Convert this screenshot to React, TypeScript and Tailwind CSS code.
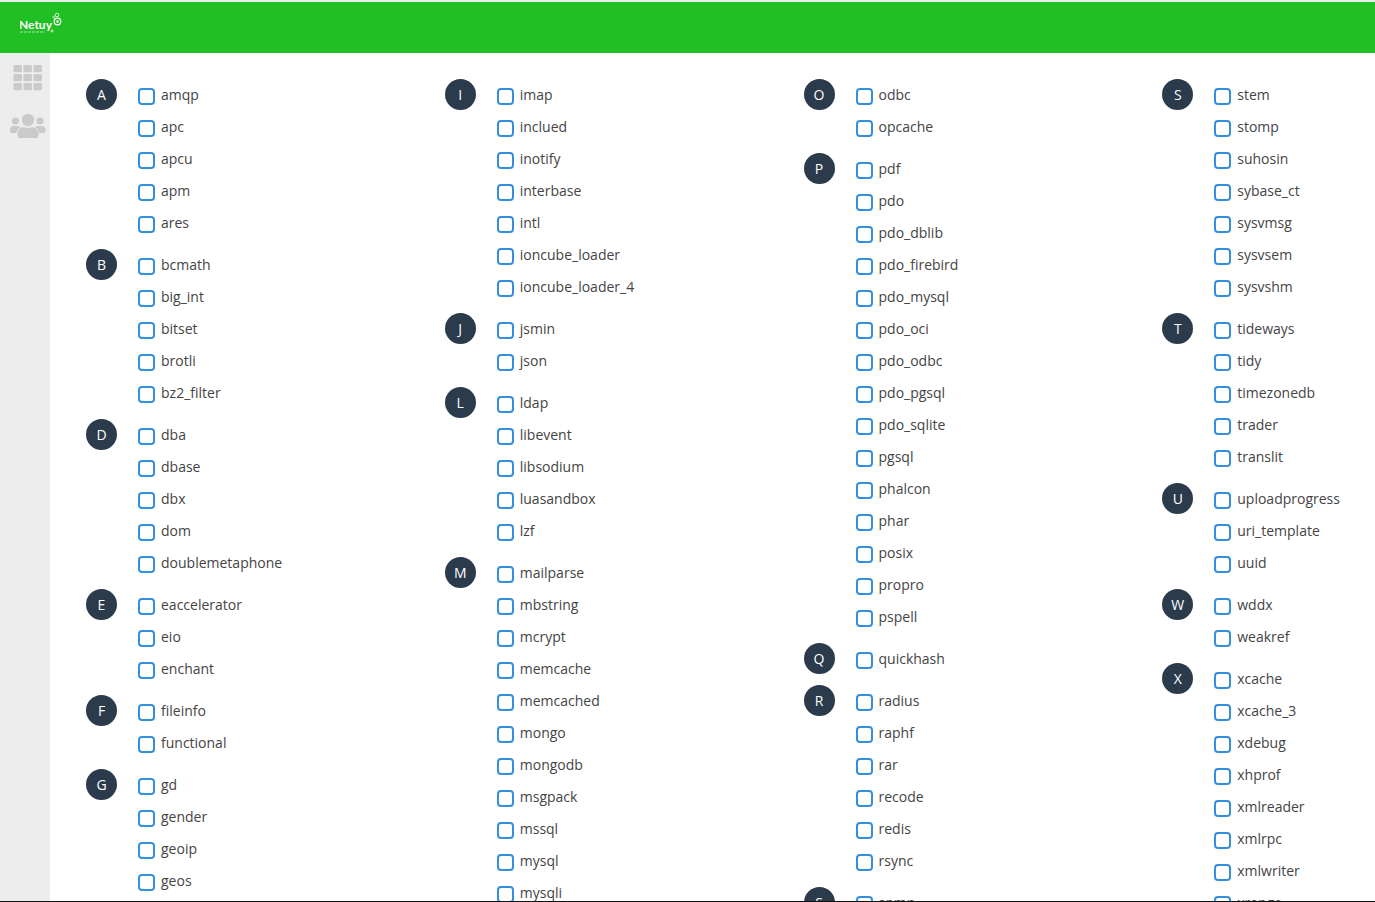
type Group = { letter: string; items: string[] };

const columns: Group[][] = [
  [
    { letter: "A", items: ["amqp", "apc", "apcu", "apm", "ares"] },
    { letter: "B", items: ["bcmath", "big_int", "bitset", "brotli", "bz2_filter"] },
    { letter: "D", items: ["dba", "dbase", "dbx", "dom", "doublemetaphone"] },
    { letter: "E", items: ["eaccelerator", "eio", "enchant"] },
    { letter: "F", items: ["fileinfo", "functional"] },
    { letter: "G", items: ["gd", "gender", "geoip", "geos"] },
  ],
  [
    { letter: "I", items: ["imap", "inclued", "inotify", "interbase", "intl", "ioncube_loader", "ioncube_loader_4"] },
    { letter: "J", items: ["jsmin", "json"] },
    { letter: "L", items: ["ldap", "libevent", "libsodium", "luasandbox", "lzf"] },
    {
      letter: "M",
      items: ["mailparse", "mbstring", "mcrypt", "memcache", "memcached", "mongo", "mongodb", "msgpack", "mssql", "mysql", "mysqli"],
    },
  ],
  [
    { letter: "O", items: ["odbc", "opcache"] },
    {
      letter: "P",
      items: [
        "pdf", "pdo", "pdo_dblib", "pdo_firebird", "pdo_mysql", "pdo_oci", "pdo_odbc", "pdo_pgsql",
        "pdo_sqlite", "pgsql", "phalcon", "phar", "posix", "propro", "pspell",
      ],
    },
    { letter: "Q", items: ["quickhash"] },
    { letter: "R", items: ["radius", "raphf", "rar", "recode", "redis", "rsync"] },
    { letter: "S", items: ["snmp"] },
  ],
  [
    { letter: "S", items: ["stem", "stomp", "suhosin", "sybase_ct", "sysvmsg", "sysvsem", "sysvshm"] },
    { letter: "T", items: ["tideways", "tidy", "timezonedb", "trader", "translit"] },
    { letter: "U", items: ["uploadprogress", "uri_template", "uuid"] },
    { letter: "W", items: ["wddx", "weakref"] },
    { letter: "X", items: ["xcache", "xcache_3", "xdebug", "xhprof", "xmlreader", "xmlrpc", "xmlwriter", "xrange"] },
  ],
];

function Logo() {
  return (
    <a href="#" aria-label="Netuy" className="block">
      <svg width="44" height="26" viewBox="0 0 44 26" fill="none">
        <text x="-1" y="19" fill="#fff" fontSize="12" fontWeight="700" fontFamily="Lato, sans-serif">
          Netuy
        </text>
        <path d="M0 22h25" stroke="#fff" strokeWidth="1" strokeDasharray="3 1" opacity="0.6" />
        <circle cx="32" cy="21" r="1" stroke="#fff" strokeWidth="0.8" />
        <circle cx="37.5" cy="11.5" r="3.3" stroke="#fff" strokeWidth="1.2" />
        <circle cx="37.5" cy="11.5" r="1.2" fill="#fff" />
        <circle cx="37" cy="5" r="1.8" stroke="#fff" strokeWidth="0.8" />
        <circle cx="33.7" cy="7" r="0.9" stroke="#fff" strokeWidth="0.6" />
      </svg>
    </a>
  );
}

function GridIcon() {
  return (
    <svg width="30" height="26" viewBox="0 0 30 26" fill="#cacaca">
      {[0, 9, 18].map((y) =>
        [0, 10, 20].map((x) => <rect key={`${x}-${y}`} x={x + 0.5} y={y} width="8.4" height="7.2" rx="1.3" />)
      )}
    </svg>
  );
}

function UsersIcon() {
  return (
    <svg width="36" height="26" viewBox="0 0 36 26" fill="#cacaca">
      <circle cx="5.5" cy="8" r="3.6" />
      <circle cx="30" cy="8" r="3.6" />
      <circle cx="18" cy="7" r="6.2" />
      <path d="M3.5 13h4.5c.9 0 1.8.3 2.4.9-2.2 1.3-3.6 3.4-4 6.1H1.7C.7 20 0 19.3 0 18.3v-1.8C0 14.6 1.6 13 3.5 13z" />
      <path d="M32 13h-4.5c-.9 0-1.8.3-2.4.9 2.2 1.3 3.6 3.4 4 6.1h4.7c1 0 1.7-.7 1.7-1.7v-1.8c0-1.9-1.6-3.5-3.5-3.5z" />
      <path d="M13.5 14.2h.9c2.3 1 4.9 1 7.2 0h.9c3.4 0 6 2.7 6 6v2.2c0 1.5-1.1 2.6-2.6 2.6H10.1c-1.5 0-2.6-1.1-2.6-2.6v-2.2c0-3.3 2.6-6 6-6z" />
    </svg>
  );
}

function ExtensionGroup({ letter, items }: Group) {
  return (
    <section className="flex items-start gap-[21px]">
      <h2 className="flex size-[31px] shrink-0 items-center justify-center rounded-full bg-[#2b3b4c] text-sm text-white">
        {letter}
      </h2>
      <ul>
        {items.map((name) => (
          <li key={name} className="h-8">
            <label className="flex h-8 items-center gap-1.5 text-sm text-[#444]">
              <input
                type="checkbox"
                name={name}
                className="mt-[3px] size-[17px] shrink-0 appearance-none rounded border-2 border-[#3490dc] bg-white checked:bg-[#3490dc]"
              />
              {name}
            </label>
          </li>
        ))}
      </ul>
    </section>
  );
}

export default function App() {
  return (
    <div className="flex h-screen flex-col overflow-hidden border-b border-[#111] bg-white font-['Open_Sans',sans-serif]">
      <header className="flex h-[53px] shrink-0 items-start border-t-2 border-[#ececec] bg-[#20bf24] px-5 pt-2">
        <Logo />
      </header>
      <div className="flex min-h-0 flex-1">
        <nav className="flex w-[50px] shrink-0 flex-col items-center gap-[22px] bg-[#ededed] pt-3 pl-1.5">
          <a href="#" aria-label="Dashboard">
            <GridIcon />
          </a>
          <a href="#" aria-label="Users">
            <UsersIcon />
          </a>
        </nav>
        <main className="grid min-w-0 flex-1 grid-cols-4 gap-x-[146px] overflow-hidden pt-[26px] pl-9">
          {columns.map((groups, i) => (
            <div key={i} className="flex min-w-0 flex-col gap-2.5">
              {groups.map((group) => (
                <ExtensionGroup key={group.items[0]} {...group} />
              ))}
            </div>
          ))}
        </main>
      </div>
    </div>
  );
}
